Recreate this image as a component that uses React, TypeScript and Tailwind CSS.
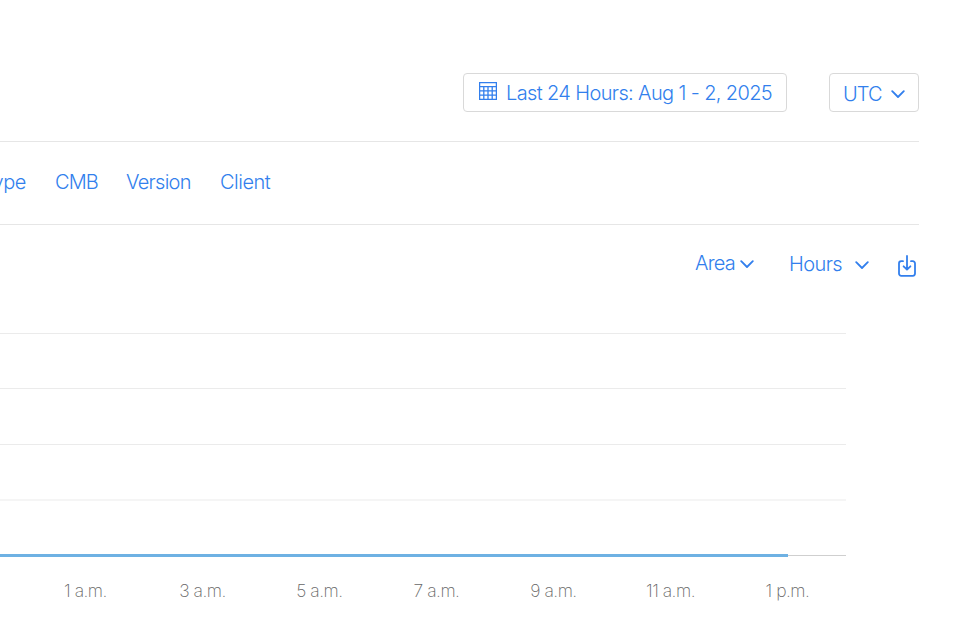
import React from "react";

function Chevron({ className }: { className: string }) {
  return (
    <svg viewBox="0 0 14 9" className={className} fill="none" stroke="currentColor" strokeWidth="1.8" strokeLinecap="round" strokeLinejoin="round">
      <path d="M1.2 1.2 7 7l5.800-5.800" />
    </svg>
  );
}

function CalendarIcon() {
  return (
    <svg viewBox="0 0 18 18" className="mt-2 ml-[15px] h-[18px] w-[18px] shrink-0" fill="none" stroke="currentColor" strokeWidth="1.3">
      <path d="M.6.6h16.8v16.8H.6zM.6 4.6h16.8M.6 8.9h16.8M.6 13.1h16.8M4.8 4.6v12.8M9 4.6v12.8M13.2 4.6v12.8" />
    </svg>
  );
}

function DownloadIcon() {
  return (
    <svg viewBox="0 0 18 22" className="mt-[30px] ml-[29px] h-[22px] w-[18px] shrink-0" fill="none" stroke="currentColor" strokeWidth="1.8" strokeLinecap="round" strokeLinejoin="round">
      <path d="M5 6.200H3.200A2.200 2.200 0 0 0 1 8.400v10.200a2.200 2.200 0 0 0 2.200 2.200h11.600a2.200 2.200 0 0 0 2.200-2.200V8.400a2.200 2.200 0 0 0-2.200-2.200H13M9 1v13.500M5.600 11.300 9 14.700l3.400-3.400" />
    </svg>
  );
}

const hours = ["1 a.m.", "3 a.m.", "5 a.m.", "7 a.m.", "9 a.m.", "11 a.m.", "1 p.m."];

export default function App() {
  return (
    <div className="h-[630px] w-[966px] overflow-hidden bg-white pr-[47px] font-['Inter',sans-serif] text-[20px] leading-6 font-light text-[#327fed]">
      <header className="flex h-[142px] items-start justify-end gap-[42px] border-b border-[#e6e6e6] pt-[73px]">
        <button className="flex h-[39px] w-[324px] items-start rounded border border-[#d9d9d9] whitespace-nowrap">
          <CalendarIcon />
          <span className="mt-[7px] ml-[9px] tracking-[-0.63px]">Last 24 Hours: Aug 1 - 2, 2025</span>
        </button>
        <button className="flex h-[39px] w-[90px] items-start rounded border border-[#d9d9d9]">
          <span className="mt-2 ml-[13px] w-[48px] text-left tracking-[-0.9px]">UTC</span>
          <Chevron className="mt-4 h-[9px] w-[14px]" />
        </button>
      </header>
      <nav className="flex h-[83px] border-b border-[#e6e6e6] pt-[28px] tracking-[-0.4px] whitespace-nowrap">
        <span className="flex w-[26px] shrink-0 justify-end">Type</span>
        <span className="ml-[29px] w-[43px] tracking-[-0.9px]">CMB</span>
        <span className="ml-[28px] w-[65px] tracking-[-0.72px]">Version</span>
        <span className="ml-[29px] tracking-[-0.5px]">Client</span>
      </nav>
      <div className="flex h-[108px] items-start justify-end pr-[3px] whitespace-nowrap">
        <button className="flex pt-[26px]">
          <span className="w-[45px] text-left tracking-[-0.8px]">Area</span>
          <Chevron className="mt-[9px] h-[9px] w-[14px]" />
        </button>
        <button className="ml-[35px] flex pt-[27px]">
          <span className="w-[66px] text-left tracking-[-0.6px]">Hours</span>
          <Chevron className="mt-[9px] h-[9px] w-[14px]" />
        </button>
        <DownloadIcon />
      </div>
      <svg viewBox="0 0 846 226" className="block h-[226px] w-[846px]">
        <g stroke="#ebebeb">
          <path d="M0 .500h846M0 55.500h846M0 111.500h846M0 167h846" />
        </g>
        <path d="M786 222.500h60" stroke="#cfcfcf" />
        <path d="M0 222.500h788" stroke="#6eb1e3" strokeWidth="3" />
      </svg>
      <div className="ml-[27px] flex pt-[19px] text-[17.5px] leading-[25px] font-extralight tracking-[-0.5px] text-[#666666]">
        {hours.map((h) => (
          <span key={h} className="w-[117px] shrink-0 text-center">{h}</span>
        ))}
      </div>
    </div>
  );
}
